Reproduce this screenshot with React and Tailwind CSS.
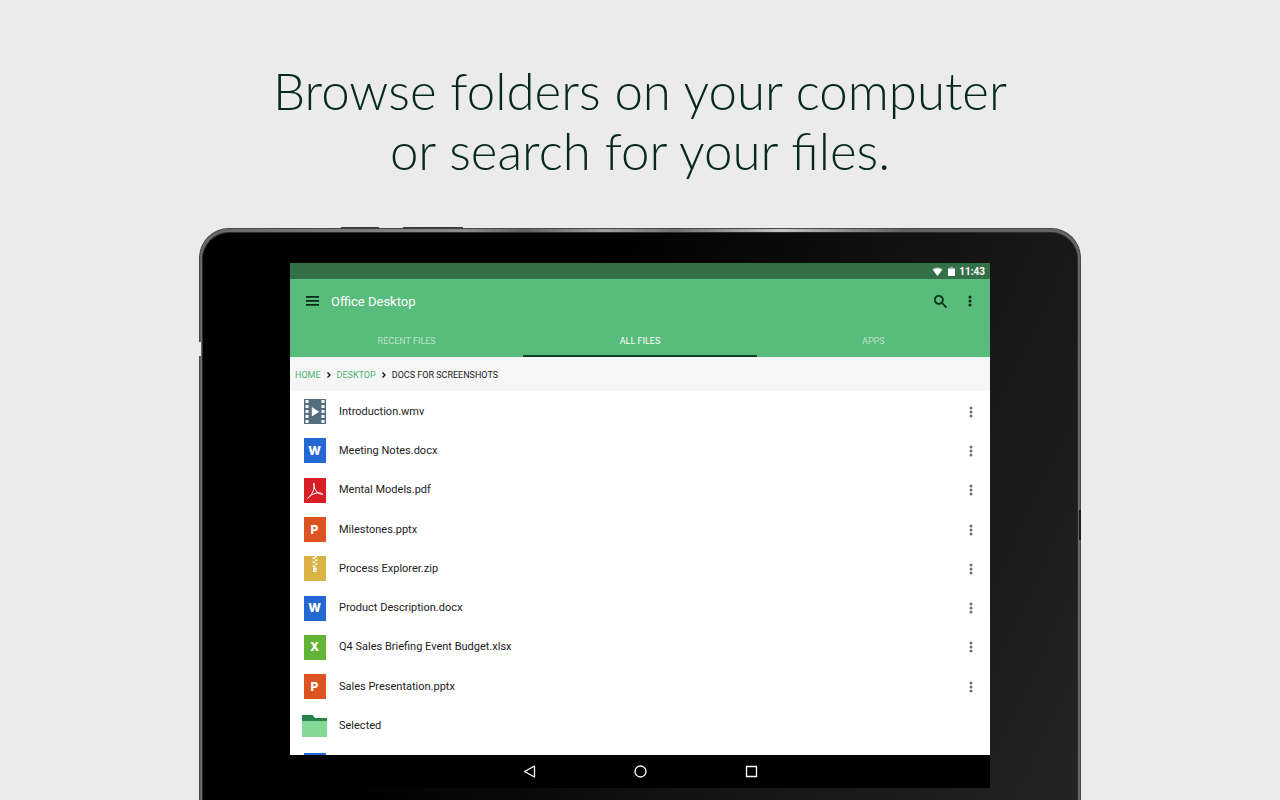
import { useState } from 'react'

const files = [
  { name: 'Introduction.wmv', type: 'video' },
  { name: 'Meeting Notes.docx', type: 'word' },
  { name: 'Mental Models.pdf', type: 'pdf' },
  { name: 'Milestones.pptx', type: 'powerpoint' },
  { name: 'Process Explorer.zip', type: 'zip' },
  { name: 'Product Description.docx', type: 'word' },
  { name: 'Q4 Sales Briefing Event Budget.xlsx', type: 'excel' },
  { name: 'Sales Presentation.pptx', type: 'powerpoint' },
  { name: 'Selected', type: 'folder' },
  { name: '', type: 'blank' },
]

const tabs = ['RECENT FILES', 'ALL FILES', 'APPS']

// Office documents: a coloured tile with one letter
const letters = {
  word: { letter: 'W', className: 'bg-[#2468d4]' },
  powerpoint: { letter: 'P', className: 'bg-[#dc5420]' },
  excel: { letter: 'X', className: 'bg-[#61b436]' },
  blank: { letter: '', className: 'bg-[#2468d4]' },
}

function Dots() {
  return (
    <svg viewBox="0 0 4 12" width="4" height="12" fill="currentColor" aria-hidden="true">
      <circle cx="2" cy="2" r="1.5" />
      <circle cx="2" cy="6" r="1.5" />
      <circle cx="2" cy="10" r="1.5" />
    </svg>
  )
}

function FileIcon({ type }) {
  if (letters[type]) {
    return (
      <span className={`flex h-[25px] w-[22px] items-center justify-center font-['Inter',sans-serif] text-[12px] leading-none font-extrabold text-white ${letters[type].className}`}>
        {letters[type].letter}
      </span>
    )
  }

  if (type === 'video') {
    return (
      <svg width="22" height="25" viewBox="0 0 22 25" aria-hidden="true">
        <path fill="#546e7f" d="M0 0h22v25H0z" />
        {[1, 6, 11, 16, 21].map((y) => (
          <g key={y} fill="#fff">
            <rect x="1.5" y={y} width="3" height="3" />
            <rect x="17.5" y={y} width="3" height="3" />
          </g>
        ))}
        <path fill="#fff" d="M7.8 8v9.4l7.4-4.7z" />
      </svg>
    )
  }

  if (type === 'pdf') {
    return (
      <svg width="22" height="25" viewBox="0 0 22 25" aria-hidden="true">
        <path fill="#d91f26" d="M0 0h22v25H0z" />
        <path
          fill="none"
          stroke="#fff"
          strokeWidth="1"
          strokeLinecap="round"
          strokeLinejoin="round"
          d="M9.800 5.500c-.3 3.200 1 6.300 3.200 8.500 1.700 1.600 3.600 2.500 5.500 2.200M4 20c2-1.200 4-4 5.200-7.200.9-2.500 1.300-5 .6-7.300M4 20c1.500-2.400 5-4.300 9-5 2.500-.4 5-.2 5.500 1.200"
        />
      </svg>
    )
  }

  if (type === 'zip') {
    return (
      <svg width="22" height="25" viewBox="0 0 22 25" aria-hidden="true">
        <path fill="#dab344" d="M0 0h22v25H0z" />
        <g fill="#fff">
          <path d="M10.500 0h2.500v1.500h-2.500zM8.500 1.500h2.500V3H8.500zM11 3.500h2.500V5H11zM8.500 5.500h2.500V7H8.500zM11 7.500h2.500V9H11zM8.500 9.500h2.500V11H8.500z" />
          <path fillRule="evenodd" d="M9 11.500h3.500V16H9zM10 14v1h1.500v-1z" />
        </g>
      </svg>
    )
  }

  return (
    <svg width="25" height="22" viewBox="0 0 25 22" aria-hidden="true">
      <path fill="#26844a" d="M0 0h10.500l2.500 3h12v4H0z" />
      <path fill="#84d996" d="M0 6h25v16H0z" />
    </svg>
  )
}

function StatusBar() {
  return (
    <div className="flex h-4 items-center justify-end gap-1 bg-[#337048] pr-[5px] text-white">
      <svg className="mr-px" width="11" height="9" viewBox="0 0 11 9" aria-hidden="true">
        <path fill="#fff" fillOpacity=".4" d="M0 2.200C3-.5 8-.5 11 2.200L5.500 9z" />
        <path fill="#fff" d="M1 2.800c2.600-1.800 6.400-1.800 9 0L5.500 9z" />
      </svg>
      <svg width="7" height="9" viewBox="0 0 7 9" aria-hidden="true">
        <path fill="#fff" fillOpacity=".5" d="M2 0h3v1h2v2H0V1h2z" />
        <path fill="#fff" d="M0 2h7v7H0z" />
      </svg>
      <span className="pt-px text-[10px] leading-4 font-bold">11:43</span>
    </div>
  )
}

function Header({ active, onSelect }) {
  return (
    <header className="bg-[#58bc7c]">
      <div className="flex h-11 items-center pr-[18px] pl-4 text-[#062b14]">
        <button type="button" aria-label="Menu">
          <svg width="13" height="10" viewBox="0 0 13 10" fill="currentColor" aria-hidden="true">
            <path d="M0 0h13v1.800H0zM0 4h13v1.800H0zM0 8h13v1.800H0z" />
          </svg>
        </button>
        <h2 className="ml-3 flex-1 pt-0.5 text-[13px] leading-5 text-white">Office Desktop</h2>
        <button type="button" aria-label="Search">
          <svg width="13" height="13" viewBox="3 3 17.500 17.500" fill="currentColor" stroke="currentColor" strokeWidth=".4" aria-hidden="true">
            <path d="M15.500 14h-.79l-.28-.27A6.471 6.471 0 0 0 16 9.500 6.500 6.500 0 1 0 9.500 16c1.610 0 3.090-.59 4.230-1.570l.27.28v.79l5 4.990L20.490 19l-4.990-5zm-6 0C7.010 14 5 11.990 5 9.500S7.010 5 9.500 5 14 7.010 14 9.500 11.990 14 9.500 14z" />
          </svg>
        </button>
        <button type="button" aria-label="More options" className="ml-[21px]">
          <Dots />
        </button>
      </div>
      <div role="tablist" className="grid h-[34px] grid-cols-3">
        {tabs.map((tab) => (
          <button
            key={tab}
            type="button"
            role="tab"
            aria-selected={tab === active}
            onClick={() => onSelect(tab)}
            className={`border-b-2 pt-[3px] text-[9px] leading-4 ${tab === active ? 'border-[#0c4020] text-white' : 'border-transparent text-white/60'}`}
          >
            {tab}
          </button>
        ))}
      </div>
    </header>
  )
}

function Chevron() {
  return (
    <svg width="4" height="6" viewBox="0 0 4 6" aria-hidden="true">
      <path fill="none" stroke="#111" strokeWidth="1.300" d="M.5.500 3 3 .5 5.500" />
    </svg>
  )
}

function Breadcrumb() {
  return (
    <nav aria-label="Breadcrumb" className="flex h-[34px] items-center gap-1.5 bg-[#f6f6f6] px-[5px] pt-px text-[9px] leading-4">
      <a href="#home" className="text-[#4db473]">HOME</a>
      <Chevron />
      <a href="#desktop" className="text-[#4db473]">DESKTOP</a>
      <Chevron />
      <span className="text-[#1c1c1c]">DOCS FOR SCREENSHOTS</span>
    </nav>
  )
}

function FileList() {
  return (
    <div className="h-[364px] overflow-hidden bg-white">
      <ul className="grid h-[393px] grid-rows-10">
        {files.map((file, i) => (
          <li key={i} className="flex items-center gap-3 pt-0.5 pr-[17px] pl-3">
            <span className="flex w-[25px] shrink-0 justify-center">
              <FileIcon type={file.type} />
            </span>
            <span className="flex-1 text-[11px] leading-4 text-[#1c1c1c]">{file.name}</span>
            {file.name && file.type !== 'folder' && (
              <button type="button" aria-label={`Options for ${file.name}`} className="text-[#6e6e6e]">
                <Dots />
              </button>
            )}
          </li>
        ))}
      </ul>
    </div>
  )
}

function NavigationBar() {
  return (
    <div className="flex h-[33px] items-center justify-center gap-[98px] bg-black text-white">
      <button type="button" aria-label="Back">
        <svg width="13" height="13" viewBox="0 0 13 13" fill="none" stroke="currentColor" strokeWidth="1.300" aria-hidden="true">
          <path strokeLinejoin="round" d="M11.500 1v11L1.500 6.500z" />
        </svg>
      </button>
      <button type="button" aria-label="Home">
        <svg width="13" height="13" viewBox="0 0 13 13" fill="none" stroke="currentColor" strokeWidth="1.300" aria-hidden="true">
          <circle cx="6.500" cy="6.500" r="5.500" />
        </svg>
      </button>
      <button type="button" aria-label="Overview">
        <svg width="13" height="13" viewBox="0 0 13 13" fill="none" stroke="currentColor" strokeWidth="1.300" aria-hidden="true">
          <path d="M1.500 1.500h10v10h-10z" />
        </svg>
      </button>
    </div>
  )
}

export default function App() {
  const [active, setActive] = useState('ALL FILES')

  return (
    <main className="flex h-screen flex-col items-center overflow-hidden bg-[#ebebeb] font-['Roboto',sans-serif]">
      <h1 className="pt-[61px] text-center font-['Lato',sans-serif] text-[51px] leading-[60px] font-light text-[#06281e]">
        Browse folders on your computer
        <br />
        or search for your files.
      </h1>

      {/* Tablet */}
      <div className="relative mt-[47px] w-full max-w-[882px] shrink-0 rounded-t-[30px] border border-b-0 border-[#4a4a4a] bg-[linear-gradient(90deg,#666,#8c8c8c_30%,#606060_37%,#a0a0a0_46%,#707070_54%,#c4c4c4_66%,#606060_80%,#666)] px-[2px] pt-[3px]">
        <span className="absolute -top-[2px] left-[141px] h-[2px] w-[38px] bg-[#3c3c3c]" />
        <span className="absolute -top-[2px] left-[203px] h-[2px] w-[60px] bg-[#3c3c3c]" />
        <span className="absolute top-[113px] -left-px h-[14px] w-[2px] bg-[#ebebeb]" />
        <span className="absolute top-[281px] -right-px h-[30px] w-[2px] bg-[#1c1c1c]" />
        <div className="rounded-t-[27px] border border-b-0 border-[#2b2b2b] bg-[linear-gradient(115deg,#000_35%,#151515_68%,#242424)] px-[87px] pt-[30px] pb-10">
          <StatusBar />
          <Header active={active} onSelect={setActive} />
          <Breadcrumb />
          <FileList />
          <NavigationBar />
        </div>
      </div>
    </main>
  )
}
